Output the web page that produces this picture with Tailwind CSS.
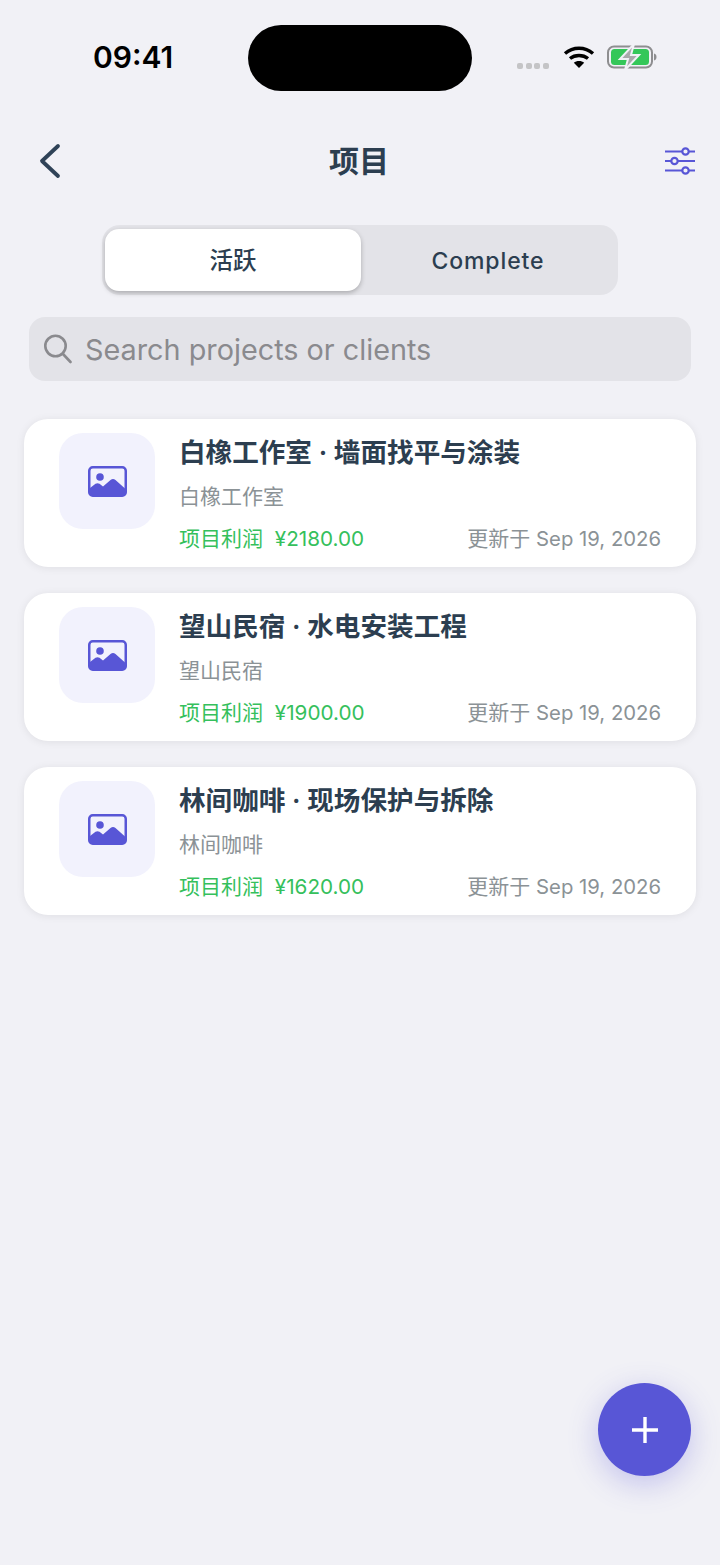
<!DOCTYPE html>
<html lang="zh-CN">
 <head>
  <meta charset="utf-8"/>
  <meta content="width=device-width, initial-scale=1.0" name="viewport"/>
  <title>项目</title>
  <script src="https://cdn.jsdelivr.net/npm/@tailwindcss/browser@4"></script>
 </head>
 <body class="bg-[#f1f1f6] font-['Inter','Noto_Sans_CJK_SC',sans-serif]">
  <div class="relative h-[1565px] w-[720px] overflow-hidden">
   <!-- status bar -->
   <div class="flex h-[116px] items-start pt-[25px]">
    <div class="w-[248px] pl-[93px] pt-[12px] text-[30px] leading-[40px] font-semibold text-black">09:41</div>
    <div class="h-[66px] w-[224px] rounded-[33px] bg-black"></div>
    <div class="flex flex-1 items-start pl-[45px] pt-[20px]">
     <div class="mt-[18px] flex gap-[2.5px]">
      <span class="h-[6px] w-[6px] rounded-[2px] bg-[#c4c4c6]"></span>
      <span class="h-[6px] w-[6px] rounded-[2px] bg-[#c4c4c6]"></span>
      <span class="h-[6px] w-[6px] rounded-[2px] bg-[#c4c4c6]"></span>
      <span class="h-[6px] w-[6px] rounded-[2px] bg-[#c4c4c6]"></span>
     </div>
     <svg class="ml-[14px]" width="32" height="24" viewBox="0 0 32 24" fill="none" stroke="#000" stroke-width="3.4">
      <path d="M2 8.5C10 1.5 22 1.5 30 8.5"/>
      <path d="M7 13.5C12 9.5 20 9.5 25 13.5"/>
      <path d="M16 23L10.8 17.8C13.5 15.5 18.5 15.5 21.2 17.8Z" fill="#000" stroke="none"/>
     </svg>
     <svg class="ml-[12px]" width="50" height="26" viewBox="0 0 50 26" fill="none">
      <rect x="1" y="1.5" width="44" height="21" rx="6" stroke="#8e8e90" stroke-width="2"/>
      <rect x="4" y="4" width="38" height="16" rx="3.5" fill="#34c759"/>
      <path d="M47 8.5C48.8 9 49.5 10.4 49.5 12S48.8 15 47 15.5Z" fill="#8e8e90"/>
      <path d="M27 -1L13 14H21L18 25L32 10H24Z" fill="#a9a9ab" stroke="#f1f1f6" stroke-width="2"/>
     </svg>
    </div>
   </div>
   <!-- nav -->
   <div class="flex h-[90px] items-center justify-between pl-[38px] pr-[24px]">
    <svg width="26" height="36" viewBox="0 0 26 36" fill="none" stroke="#2f4257" stroke-width="3.8" stroke-linecap="round" stroke-linejoin="round">
     <path d="M20 3L4 18L20 33"/>
    </svg>
    <h1 class="mr-[10px] text-[30px] leading-[40px] font-semibold text-[#2c3e50]">项目</h1>
    <svg width="32" height="28" viewBox="0 0 32 28" fill="none" stroke="#5856d6" stroke-width="2.2">
     <path d="M1 4.5H31M1 14H31M1 23.5H31"/>
     <circle cx="21.500" cy="4.500" r="3.200" fill="#f1f1f6"/>
     <circle cx="10.500" cy="14" r="3.200" fill="#f1f1f6"/>
     <circle cx="21.500" cy="23.500" r="3.200" fill="#f1f1f6"/>
    </svg>
   </div>
   <!-- segmented control -->
   <div class="mt-[19px] ml-[102px] flex h-[70px] w-[516px] rounded-[18px] bg-[#e3e3e8] p-[4px]">
    <div class="flex h-[62px] w-[256px] -translate-x-px items-center justify-center rounded-[14px] bg-white pt-[2px] text-[23.500px] font-medium text-[#2c3e50] shadow-[0_2px_5px_rgba(0,0,0,0.25)]">活跃</div>
    <div class="flex flex-1 items-center justify-center pt-[2px] text-[23px] font-medium tracking-[0.9px] text-[#2c3e50]">Complete</div>
   </div>
   <!-- search -->
   <div class="mt-[22px] ml-[29px] flex h-[64px] w-[662px] items-center rounded-[16px] bg-[#e3e3e8] pl-[15px]">
    <svg width="28" height="30" viewBox="0 0 28 30" fill="none" stroke="#8a8a8e" stroke-width="2.600" stroke-linecap="round">
     <circle cx="11.500" cy="12" r="10.200"/>
     <path d="M19 20L26.500 28"/>
    </svg>
    <span class="ml-[13px] pt-[2px] text-[28.800px] text-[#8a8a8e]">Search projects or clients</span>
   </div>
   <!-- project list -->
   <div class="mt-[38px] ml-[24px] flex w-[672px] flex-col gap-[26px]">
    <div class="flex h-[148px] rounded-[24px] bg-white pl-[35px] pt-[14px] pr-[35px] shadow-[0_1px_8px_rgba(0,0,0,0.08)]">
     <div class="flex h-[96px] w-[96px] shrink-0 items-center justify-center rounded-[24px] bg-[#f2f2fd]">
      <svg width="39" height="31" viewBox="0 0 39 31"><rect x="1.250" y="1.250" width="36.500" height="28.500" rx="3.500" fill="none" stroke="#5856d6" stroke-width="2.500"/><circle cx="12" cy="11" r="3.800" fill="#5856d6"/><path fill="#5856d6" d="M2 22L7.500 17.800Q9.500 16.500 11.500 17.800L15 20.500L22.500 14Q25 12 27.500 14L37 22.500V27A3 3 0 0 1 34 30H5A3 3 0 0 1 2 27Z"/></svg>
     </div>
     <div class="ml-[24px] flex min-w-0 flex-1 flex-col">
      <div class="h-[38px] text-[26.600px] leading-[38px] font-semibold whitespace-nowrap text-[#2c3e50]">白橡工作室 · 墙面找平与涂装</div>
      <div class="mt-[11px] h-[30px] text-[21px] leading-[30px] text-[#8b9296]">白橡工作室</div>
      <div class="mt-[12px] flex items-center justify-between text-[21px] leading-[30px]">
       <span class="text-[#35c05c]">项目利润&nbsp; <span class="text-[20.700px]">¥2180.00</span></span>
       <span class="text-[#8b9296]">更新于 <span class="text-[20.300px]">Sep 19, 2026</span></span>
      </div>
     </div>
    </div>
    <div class="flex h-[148px] rounded-[24px] bg-white pl-[35px] pt-[14px] pr-[35px] shadow-[0_1px_8px_rgba(0,0,0,0.08)]">
     <div class="flex h-[96px] w-[96px] shrink-0 items-center justify-center rounded-[24px] bg-[#f2f2fd]">
      <svg width="39" height="31" viewBox="0 0 39 31"><rect x="1.250" y="1.250" width="36.500" height="28.500" rx="3.500" fill="none" stroke="#5856d6" stroke-width="2.500"/><circle cx="12" cy="11" r="3.800" fill="#5856d6"/><path fill="#5856d6" d="M2 22L7.500 17.800Q9.500 16.500 11.500 17.800L15 20.500L22.500 14Q25 12 27.500 14L37 22.500V27A3 3 0 0 1 34 30H5A3 3 0 0 1 2 27Z"/></svg>
     </div>
     <div class="ml-[24px] flex min-w-0 flex-1 flex-col">
      <div class="h-[38px] text-[26.600px] leading-[38px] font-semibold whitespace-nowrap text-[#2c3e50]">望山民宿 · 水电安装工程</div>
      <div class="mt-[11px] h-[30px] text-[21px] leading-[30px] text-[#8b9296]">望山民宿</div>
      <div class="mt-[12px] flex items-center justify-between text-[21px] leading-[30px]">
       <span class="text-[#35c05c]">项目利润&nbsp; <span class="text-[20.700px]">¥1900.00</span></span>
       <span class="text-[#8b9296]">更新于 <span class="text-[20.300px]">Sep 19, 2026</span></span>
      </div>
     </div>
    </div>
    <div class="flex h-[148px] rounded-[24px] bg-white pl-[35px] pt-[14px] pr-[35px] shadow-[0_1px_8px_rgba(0,0,0,0.08)]">
     <div class="flex h-[96px] w-[96px] shrink-0 items-center justify-center rounded-[24px] bg-[#f2f2fd]">
      <svg width="39" height="31" viewBox="0 0 39 31"><rect x="1.250" y="1.250" width="36.500" height="28.500" rx="3.500" fill="none" stroke="#5856d6" stroke-width="2.500"/><circle cx="12" cy="11" r="3.800" fill="#5856d6"/><path fill="#5856d6" d="M2 22L7.500 17.800Q9.500 16.500 11.500 17.800L15 20.500L22.500 14Q25 12 27.500 14L37 22.500V27A3 3 0 0 1 34 30H5A3 3 0 0 1 2 27Z"/></svg>
     </div>
     <div class="ml-[24px] flex min-w-0 flex-1 flex-col">
      <div class="h-[38px] text-[26.600px] leading-[38px] font-semibold whitespace-nowrap text-[#2c3e50]">林间咖啡 · 现场保护与拆除</div>
      <div class="mt-[11px] h-[30px] text-[21px] leading-[30px] text-[#8b9296]">林间咖啡</div>
      <div class="mt-[12px] flex items-center justify-between text-[21px] leading-[30px]">
       <span class="text-[#35c05c]">项目利润&nbsp; <span class="text-[20.700px]">¥1620.00</span></span>
       <span class="text-[#8b9296]">更新于 <span class="text-[20.300px]">Sep 19, 2026</span></span>
      </div>
     </div>
    </div>
   </div>
   <!-- add button -->
   <div class="absolute top-[1383px] left-[598px] flex h-[93px] w-[93px] items-center justify-center rounded-full bg-[#5856d6] shadow-[0_8px_30px_rgba(88,86,214,0.3)]">
    <svg width="28" height="28" viewBox="0 0 28 28" fill="none" stroke="#fff" stroke-width="3.400">
     <path d="M14 1V27M1 14H27"/>
    </svg>
   </div>
  </div>
 </body>
</html>
